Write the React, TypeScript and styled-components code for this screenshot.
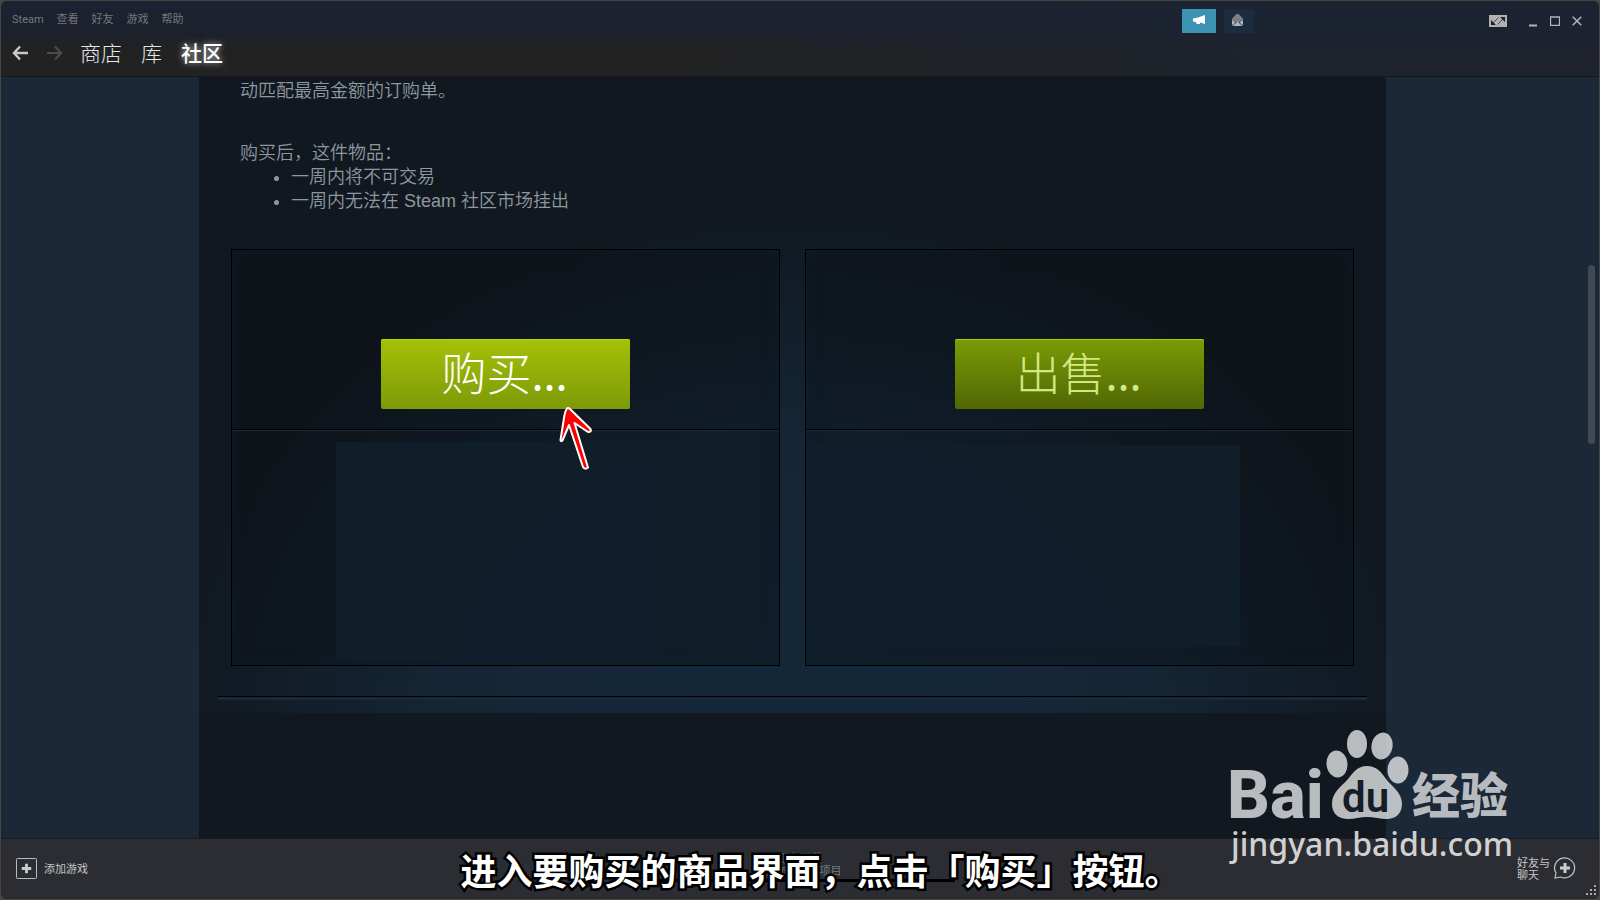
import React from "react";
import styled, { createGlobalStyle, css } from "styled-components";

const cjk = `"Noto Sans CJK SC", sans-serif`;

const GlobalStyle = createGlobalStyle`
  * { box-sizing: border-box; }
  html, body, #root { height: 100%; }
  body {
    margin: 0;
    background: #48443f;
    font-family: "Liberation Sans", ${cjk};
    overflow: hidden;
  }
  button, a, ul, p { margin: 0; padding: 0; }
  button { border: 0; background: none; font: inherit; color: inherit; cursor: pointer; }
  a { color: inherit; text-decoration: none; }
`;

const Desktop = styled.div`
  height: 100vh;
  padding: 1px;
`;

const Window = styled.div`
  position: relative;
  height: 100%;
  display: flex;
  flex-direction: column;
  border-radius: 6px;
  overflow: hidden;
  background: #1b2838;
`;

const Header = styled.header`
  flex: none;
  height: 76px;
  display: flex;
  justify-content: space-between;
  border-bottom: 1px solid #171717;
  background:
    linear-gradient(to right, transparent 40%, rgba(27, 35, 51, 0.6) 80%),
    linear-gradient(to bottom, #1b2233 0, #1d212b 32px, #222222 52px, #222222 100%);
`;

const HeaderLeft = styled.div`
  display: flex;
  flex-direction: column;
`;

const MenuBar = styled.nav`
  display: flex;
  gap: 13px;
  padding: 9px 11px 0;
  height: 32px;
  font-family: Roboto, ${cjk};
  font-size: 11px;
  line-height: 19px;
  color: #74777d;
`;

const NavBar = styled.nav`
  display: flex;
  align-items: center;
  height: 40px;
  padding-left: 11px;
`;

const Arrow = styled.button`
  display: flex;
  width: 34px;
  color: #c8c8c8;
  &:disabled { color: #4a4a4a; }
`;

const NavLink = styled.a<{ $active?: boolean }>`
  margin-right: 19px;
  font-family: ${cjk};
  font-size: 21px;
  line-height: 38px;
  padding-bottom: 2px;
  font-weight: 300;
  color: #e4e6e7;
  ${(p) => p.$active && css`
    font-weight: 500;
    color: #fff;
    text-shadow: 0 0 6px rgba(255, 255, 255, 0.7);
  `}
`;

const HeaderRight = styled.div`
  display: flex;
  align-items: flex-start;
  padding-top: 8px;
`;

const Notice = styled.button<{ $bright?: boolean }>`
  display: flex;
  align-items: center;
  justify-content: center;
  width: ${(p) => (p.$bright ? 34 : 30)}px;
  height: 24px;
  padding: 0 ${(p) => (p.$bright ? 0 : 3)}px 2px 0;
  margin-right: ${(p) => (p.$bright ? 8 : 233)}px;
  background: ${(p) => (p.$bright ? "#3d94b2" : "#1a2c3d")};
`;

const WindowButton = styled.button`
  display: flex;
  align-items: center;
  justify-content: center;
  width: 22px;
  height: 24px;
  color: #b5b3b5;
`;

const WindowButtons = styled.div`
  display: flex;
  margin-left: 13px;
  padding-right: 11px;
`;

const Viewport = styled.main`
  position: relative;
  flex: 1;
  min-height: 0;
  display: flex;
  padding: 0 213px 0 198px;
`;

const Page = styled.div`
  flex: 1;
  min-width: 0;
  background: #111820;
`;

const Glow = styled.div`
  height: 636px;
  padding: 0 19px;
  background:
    radial-gradient(ellipse 620px 500px at 50% 100%, #15283a 0, #142636 55%, rgba(20, 38, 54, 0.5) 76%, rgba(17, 24, 32, 0) 100%);
`;

const Description = styled.section`
  height: 172px;
  padding: 2px 22px 0;
  font-size: 18px;
  line-height: 24px;
  font-weight: 350;
  color: #8f98a0;
`;

const Notes = styled.div`
  margin-top: 38px;
`;

const NoteList = styled.ul`
  padding-left: 51px;
`;

const Panels = styled.div`
  display: flex;
  gap: 25px;
  padding: 0 13px;
`;

const Panel = styled.section`
  flex: 1;
  border: 1px solid #000;
  background: rgba(8, 12, 15, 0.34);
  box-shadow: inset 0 0 16px rgba(16, 34, 44, 0.6);
`;

const PanelTop = styled.div`
  display: flex;
  justify-content: center;
  height: 180px;
  padding-top: 89px;
  border-bottom: 1px solid #000;
`;

const PanelBottom = styled.div<{ $side: "left" | "right" }>`
  height: 235px;
  border-top: 1px solid #1b2838;
  padding: ${(p) => (p.$side === "left" ? "11px 121px 4px 104px" : "14px 113px 18px 0")};
`;

const OrderTable = styled.div`
  height: 100%;
  background: rgba(17, 31, 43, 0.9);
`;

const TradeButton = styled.button<{ $dim?: boolean }>`
  width: 249px;
  height: 70px;
  border-radius: 2px;
  font-family: ${cjk};
  font-size: 45px;
  line-height: 66px;
  font-weight: 300;
  padding: 0 2px 4px 0;
  color: ${(p) => (p.$dim ? "#d2e885" : "#fff")};
  background: ${(p) =>
    p.$dim
      ? "linear-gradient(to bottom, #799905 5%, #536904 95%)"
      : "linear-gradient(to bottom, #a4c007 3%, #7e9b08 97%)"};
  box-shadow: inset 0 1px 0 ${(p) => (p.$dim ? "#a4d007" : "#b4d908")};
`;

const Dots = styled.span`
  font-family: "Noto Sans", sans-serif;
  font-weight: 400;
`;

const Divider = styled.div`
  height: 4px;
  margin-top: 30px;
  border-top: 1px solid #000;
  background: #1b2838;
`;

const ScrollTrack = styled.div`
  position: absolute;
  top: 0;
  right: 4px;
  bottom: 0;
  width: 7px;
  padding-top: 188px;
`;

const ScrollThumb = styled.div`
  height: 179px;
  border-radius: 4px;
  background: #434953;
`;

const Footer = styled.footer`
  position: relative;
  flex: none;
  height: 61px;
  display: grid;
  grid-template-columns: 1fr 310px 1fr;
  align-items: center;
  padding: 0 15px;
  border-top: 1px solid #191b1e;
  background: #2b2d32;
  font-family: ${cjk};
  font-size: 11px;
  line-height: 12px;
  color: #c3c5c8;
`;

const FooterButton = styled.button<{ $end?: boolean }>`
  display: flex;
  align-items: center;
  justify-self: ${(p) => (p.$end ? "end" : "start")};
  gap: ${(p) => (p.$end ? 4 : 7)}px;
  margin: 0 ${(p) => (p.$end ? 8 : 0)}px 2px 0;
  text-align: left;
`;

const Downloads = styled.div`
  margin-bottom: 5px;
  color: #75787c;
  text-align: center;
  line-height: 13px;
`;

const ProgressLine = styled.div`
  height: 3px;
  margin-top: 2px;
  background: #000;
`;

const Grip = styled.svg`
  position: absolute;
  right: 2px;
  bottom: 3px;
`;

const Subtitle = styled.p`
  position: absolute;
  left: 0;
  right: 0;
  bottom: 4px;
  padding-left: 41px;
  text-align: center;
  font-family: ${cjk};
  font-size: 36px;
  line-height: 52px;
  font-weight: 700;
  color: #fff;
  -webkit-text-stroke: 5px #000;
  paint-order: stroke fill;
  pointer-events: none;
`;

const Watermark = styled.svg`
  position: absolute;
  right: 77px;
  bottom: 27px;
  pointer-events: none;
`;

const Pointer = styled.svg`
  position: absolute;
  left: 554px;
  top: 401px;
  pointer-events: none;
`;

const PlusMark = () => <path d="M11 6v10M6 11h10" stroke="#c9cbcd" strokeWidth="3" fill="none" />;

export default function App() {
  return (
    <Desktop>
      <GlobalStyle />
      <Window>
        <Header>
          <HeaderLeft>
            <MenuBar>
              {["Steam", "查看", "好友", "游戏", "帮助"].map((m) => (
                <a href="#" key={m}>{m}</a>
              ))}
            </MenuBar>
            <NavBar>
              <Arrow aria-label="后退">
                <svg width="17" height="16" viewBox="0 0 17 16" fill="none" stroke="currentColor" strokeWidth="2.4">
                  <path d="M16 8H2M8 1.5L2 8l6 6.500" />
                </svg>
              </Arrow>
              <Arrow aria-label="前进" disabled>
                <svg width="17" height="16" viewBox="0 0 17 16" fill="none" stroke="currentColor" strokeWidth="2.2">
                  <path d="M1 8h14M9 1.500L15 8l-6 6.500" />
                </svg>
              </Arrow>
              <NavLink href="#">商店</NavLink>
              <NavLink href="#">库</NavLink>
              <NavLink href="#" $active>社区</NavLink>
            </NavBar>
          </HeaderLeft>
          <HeaderRight>
            <Notice $bright aria-label="公告">
              <svg width="12" height="10" viewBox="0 0 12 10" fill="#fff">
                <path d="M12 0v9L7 7.500V9H3.500L3 7 0 6.500v-3L5 2.500z" />
              </svg>
            </Notice>
            <Notice aria-label="消息">
              <svg width="11" height="12" viewBox="0 0 11 12">
                <path d="M0 4.500L4.500 0h2L11 4.500V6L8 8H3L0 6z" fill="#7d7d84" />
                <path d="M0 6l3.500 2.500L0 11.500zM11 6v5.500L7.500 8.500zM5.500 7.500L10.500 12H.5z" fill="#b0b3b8" />
              </svg>
            </Notice>
            <WindowButton aria-label="大屏幕模式">
              <svg width="18" height="12" viewBox="0 0 18 12">
                <path d="M0 0h18v12H0z" fill="#b2b0b3" />
                <path d="M11 2h5v5zM2 5v5h5z" fill="#1d212d" />
                <path d="M14 4L8.500 9.500M4 8l5.500-5.500" stroke="#1d212d" strokeWidth=".7" fill="none" />
              </svg>
            </WindowButton>
            <WindowButtons>
              <WindowButton aria-label="最小化">
                <svg width="10" height="12" viewBox="0 0 10 12"><path d="M1 9.500h8v2H1z" fill="currentColor" /></svg>
              </WindowButton>
              <WindowButton aria-label="最大化">
                <svg width="10" height="10" viewBox="0 0 10 10"><path d="M.5 1h9v8.500h-9zM0 1h10" fill="none" stroke="currentColor" strokeWidth="1.300" /></svg>
              </WindowButton>
              <WindowButton aria-label="关闭">
                <svg width="10" height="10" viewBox="0 0 10 10"><path d="M.7.7l8.600 8.600M9.300.7L.7 9.300" stroke="currentColor" strokeWidth="1.500" /></svg>
              </WindowButton>
            </WindowButtons>
          </HeaderRight>
        </Header>

        <Viewport>
          <Page>
            <Glow>
              <Description>
                <p>动匹配最高金额的订购单。</p>
                <Notes>
                  <p>购买后，这件物品：</p>
                  <NoteList>
                    <li>一周内将不可交易</li>
                    <li>一周内无法在 Steam 社区市场挂出</li>
                  </NoteList>
                </Notes>
              </Description>
              <Panels>
                <Panel>
                  <PanelTop>
                    <TradeButton>购买<Dots>...</Dots></TradeButton>
                  </PanelTop>
                  <PanelBottom $side="left"><OrderTable /></PanelBottom>
                </Panel>
                <Panel>
                  <PanelTop>
                    <TradeButton $dim>出售<Dots>...</Dots></TradeButton>
                  </PanelTop>
                  <PanelBottom $side="right"><OrderTable /></PanelBottom>
                </Panel>
              </Panels>
              <Divider />
            </Glow>
          </Page>
          <ScrollTrack><ScrollThumb /></ScrollTrack>
        </Viewport>

        <Footer>
          <FooterButton>
            <svg width="21" height="21" viewBox="0 0 22 22">
              <rect x=".5" y=".5" width="21" height="21" rx="1" fill="none" stroke="#c3c5c8" />
              <PlusMark />
            </svg>
            添加游戏
          </FooterButton>
          <Downloads>
            <div>正在下载</div>
            <div>已完成 12 个项目</div>
            <ProgressLine />
          </Downloads>
          <FooterButton $end>
            <span>好友与<br />聊天</span>
            <svg width="22" height="22" viewBox="0 0 22 22">
              <path d="M1 21l1-5A10 10 0 1 1 6.500 20z" fill="none" stroke="#c3c5c8" strokeWidth="1.200" />
              <PlusMark />
            </svg>
          </FooterButton>
          <Grip width="11" height="11" viewBox="0 0 11 11" fill="#a6a8ab">
            <path d="M8 0h2v2H8zM4 4h2v2H4zM8 4h2v2H8zM0 8h2v2H0zM4 8h2v2H4zM8 8h2v2H8z" />
          </Grip>
        </Footer>

        <Watermark width="294" height="144" viewBox="1228 728 294 144">
          <g fill="#fff" fillOpacity=".71">
            <text x="1227" y="818" fontFamily="Roboto, sans-serif" fontWeight="800" fontSize="67">Bai</text>
            <ellipse cx="1337" cy="764" rx="10.500" ry="13.500" transform="rotate(-6 1337 764)" />
            <ellipse cx="1357" cy="744" rx="10" ry="14" />
            <ellipse cx="1382" cy="746" rx="10.500" ry="13.500" transform="rotate(12 1382 746)" />
            <ellipse cx="1398" cy="770" rx="10.500" ry="13.500" />
            <path d="M1367 766c10 0 15 7 19 13 6 8 16 13 16 25 0 10-7 15-15 15-7 0-13-2-20-2s-12 2-19 2c-9 0-16-5-16-15 0-12 9-17 16-25 5-6 9-13 19-13z" />
            <text x="1412" y="813" fontFamily="Noto Sans CJK SC, sans-serif" fontWeight="900" fontSize="48">经验</text>
          </g>
          <text x="1342" y="812" fontFamily="Roboto, sans-serif" fontWeight="600" fontSize="42" fill="#141d28">du</text>
          <text x="1231" y="856" fontFamily="Noto Sans, sans-serif" fontWeight="500" fontSize="32" fill="#fff" fillOpacity=".8">jingyan.baidu.com</text>
        </Watermark>

        <Pointer width="44" height="76" viewBox="555 402 44 76">
          <path
            d="M567 408.500Q565 411 564 418L560.500 440Q560.500 442 562.500 440.500L569 425 583 467Q585 470 588 467.500L574.500 423 588 432Q592 432 590.500 429L570 409Q568 407.500 567 408.500z"
            fill="#f00" stroke="#fff" strokeWidth="2" strokeLinejoin="round"
          />
        </Pointer>
        <Subtitle>进入要购买的商品界面，点击「购买」按钮。</Subtitle>
      </Window>
    </Desktop>
  );
}
